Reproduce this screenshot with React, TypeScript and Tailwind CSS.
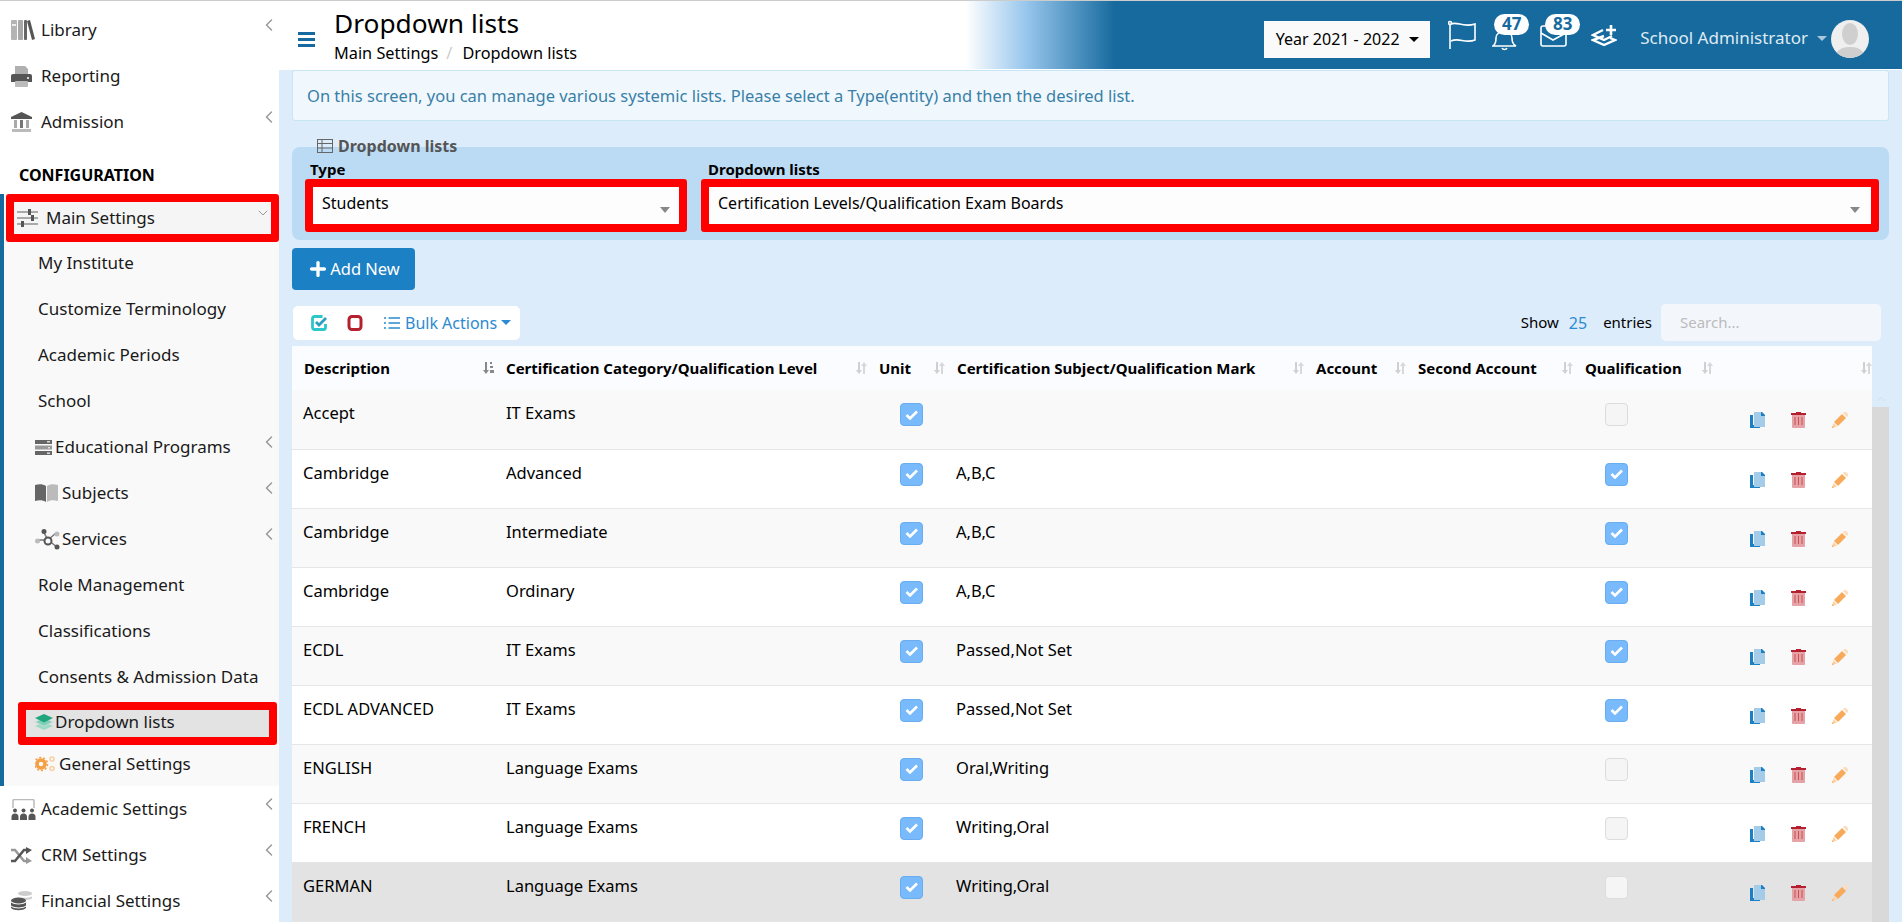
import { ChevronLeft, ChevronDown, ChevronUp, Plus } from "lucide-react";
import type { ReactNode } from "react";

function BooksIcon() {
  return (
    <svg width="24" height="20" viewBox="0 0 24 20" className="shrink-0">
      <rect x="0" y="0" width="6" height="20" rx="1" fill="#b4b4b4" />
      <rect x="1" y="4" width="4" height="2" fill="#eee" />
      <rect x="7" y="0" width="5" height="20" rx="1" fill="#a8a8a8" />
      <rect x="13" y="0" width="3" height="20" rx="1" fill="#666" />
      <path d="M16 1l3-1 5 19-3 1z" fill="#555" />
    </svg>
  );
}

function PrinterIcon() {
  return (
    <svg width="21" height="21" viewBox="0 0 21 21" className="shrink-0">
      <path d="M4 0h10l3 3v6H4z" fill="#b0b0b0" />
      <path d="M2 8h17a2 2 0 0 1 2 2v6H0v-6a2 2 0 0 1 2-2z" fill="#555" />
      <circle cx="17" cy="12" r="1" fill="#fff" />
      <rect x="4" y="15" width="13" height="6" rx="1" fill="#bbb" />
    </svg>
  );
}

function BankIcon() {
  return (
    <svg width="21" height="20" viewBox="0 0 21 20" className="shrink-0">
      <path d="M10.500 0L21 5v2H0V5z" fill="#555" />
      <rect x="3" y="8" width="3" height="8" fill="#aaa" />
      <rect x="9" y="8" width="3" height="8" fill="#777" />
      <rect x="15" y="8" width="3" height="8" fill="#aaa" />
      <rect x="1" y="17" width="19" height="3" fill="#bbb" />
    </svg>
  );
}

function SlidersIcon() {
  return (
    <svg width="21" height="18" viewBox="0 0 21 18" className="shrink-0">
      <rect x="0" y="2" width="21" height="2" fill="#aaa" />
      <rect x="0" y="8" width="21" height="2" fill="#aaa" />
      <rect x="0" y="14" width="21" height="2" fill="#aaa" />
      <rect x="11" y="0" width="3" height="6" fill="#555" />
      <rect x="14" y="6" width="3" height="6" fill="#555" />
      <rect x="4" y="12" width="3" height="6" fill="#555" />
    </svg>
  );
}

function ServerIcon() {
  return (
    <svg width="17" height="15" viewBox="0 0 17 15" className="shrink-0">
      <rect x="0" y="0" width="17" height="4" fill="#666" />
      <rect x="0" y="5.500" width="17" height="4" fill="#999" />
      <rect x="0" y="11" width="17" height="4" fill="#666" />
      <rect x="12" y="1" width="3" height="1.500" fill="#ddd" />
      <rect x="13" y="7" width="2" height="1.500" fill="#ddd" />
      <rect x="12" y="12.500" width="3" height="1.500" fill="#ddd" />
    </svg>
  );
}

function BookIcon() {
  return (
    <svg width="23" height="18" viewBox="0 0 23 18" className="shrink-0">
      <path d="M0 1c4-1 8-1 11 1v16C8 16 4 16 0 17z" fill="#666" />
      <path d="M12 2c3-2 7-2 11-1v16c-4-1-8-1-11 1z" fill="#bbb" />
    </svg>
  );
}

function NodesIcon() {
  return (
    <svg width="25" height="21" viewBox="0 0 25 21" className="shrink-0">
      <path d="M8 2l5 9 9 7M13 11H3M13 11l8-7" stroke="#777" strokeWidth="1.500" fill="none" />
      <circle cx="2.500" cy="12" r="2.500" fill="#bbb" />
      <circle cx="9" cy="2.500" r="2.500" fill="#555" />
      <circle cx="22" cy="5" r="2.500" fill="#bbb" />
      <circle cx="22" cy="18" r="2.500" fill="#555" />
      <circle cx="13" cy="12" r="3.500" fill="#f9f9f9" stroke="#555" strokeWidth="2" />
    </svg>
  );
}

function LayersIcon() {
  return (
    <svg width="18" height="16" viewBox="0 0 18 16" className="shrink-0">
      <path d="M9 8l9 4-9 4-9-4z" fill="#9fdac6" />
      <path d="M9 4l9 4-9 4-9-4z" fill="#7fd0b6" stroke="#e3e3e3" strokeWidth="0.500" />
      <path d="M9 0l9 4-9 4.500L0 4z" fill="#1fa67f" />
    </svg>
  );
}

function CogsIcon() {
  return (
    <svg width="21" height="16" viewBox="0 0 21 16" className="shrink-0">
      <circle cx="6" cy="8" r="4" fill="none" stroke="#f59e42" strokeWidth="3.500" />
      <circle cx="6" cy="8" r="6.500" fill="none" stroke="#f59e42" strokeWidth="1.500" strokeDasharray="2 2" />
      <circle cx="17" cy="3" r="2" fill="none" stroke="#f9cfa0" strokeWidth="1.500" />
      <circle cx="17" cy="12.500" r="2" fill="none" stroke="#f9cfa0" strokeWidth="1.500" />
    </svg>
  );
}

function ClassroomIcon() {
  return (
    <svg width="25" height="21" viewBox="0 0 25 21" className="shrink-0">
      <path d="M2 9V2a1.500 1.500 0 0 1 1.500-1.500h18A1.500 1.500 0 0 1 23 2v7" stroke="#bbb" strokeWidth="1.500" fill="none" />
      {[4, 12.500, 21].map((x) => (
        <g key={x} fill="#555">
          <circle cx={x} cy="11.500" r="2" />
          <path d={`M${x - 3.500} 21v-3a3 3 0 0 1 7 0v3z`} />
        </g>
      ))}
    </svg>
  );
}

function ShuffleIcon() {
  return (
    <svg width="21" height="17" viewBox="0 0 21 17" className="shrink-0">
      <path d="M0 3h4l9 11h3" stroke="#999" strokeWidth="2.500" fill="none" />
      <path d="M0 14h4l9-11h3" stroke="#555" strokeWidth="2.500" fill="none" />
      <path d="M15 0l6 3-6 4z" fill="#555" />
      <path d="M15 10l6 4-6 3z" fill="#999" />
    </svg>
  );
}

function CoinsIcon() {
  return (
    <svg width="21" height="20" viewBox="0 0 21 20" className="shrink-0">
      <ellipse cx="14" cy="2.500" rx="7" ry="2.500" fill="#ccc" />
      <path d="M11 6.500c3 .5 7 .5 10-1v2c-2 1.500-6 1.500-10 1z" fill="#ccc" />
      <ellipse cx="7.500" cy="9.500" rx="7.500" ry="3" fill="#555" />
      <path d="M0 11.500c3 2.500 12 2.500 15 0v3c-3 2.500-12 2.500-15 0z" fill="#555" />
      <path d="M0 15.500c3 2.500 12 2.500 15 0v1.500c-3 3-12 3-15 0z" fill="#555" />
    </svg>
  );
}

function SortIcon({ active = false }: { active?: boolean }) {
  if (active) {
    return (
      <svg width="11" height="12" viewBox="0 0 11 12" className="shrink-0">
        <path d="M2 0h2v8h2l-3 4-3-4h2z" fill="#888" />
        <rect x="7" y="0" width="2" height="2" fill="#888" />
        <rect x="7" y="4" width="3" height="2" fill="#888" />
        <rect x="7" y="8" width="4" height="3" fill="#888" />
      </svg>
    );
  }
  return (
    <svg width="11" height="12" viewBox="0 0 11 12" className="shrink-0">
      <path d="M2 0h2v8h2l-3 4-3-4h2z" fill="#d0d0d0" />
      <path d="M7 12h2V4h2L8 0 5 4h2z" fill="#d8d8d8" />
    </svg>
  );
}

function CopyIcon() {
  return (
    <svg width="15" height="16" viewBox="0 0 15 16">
      <path d="M0 3h3v10h7v3H0z" fill="#1b80c4" />
      <path d="M4 0h7v4h4v11H4z" fill="#a4cbe8" />
      <path d="M11 0h1l3 3v1h-4z" fill="#1b80c4" />
    </svg>
  );
}

function TrashIcon() {
  return (
    <svg width="15" height="16" viewBox="0 0 15 16">
      <path d="M1 3h13v12a1 1 0 0 1-1 1H2a1 1 0 0 1-1-1z" fill="#e5a3a8" />
      <rect x="0" y="1" width="15" height="2" fill="#b5202e" />
      <rect x="5" y="0" width="5" height="1" fill="#b5202e" />
      <rect x="3.500" y="5" width="1" height="8" fill="#c9504f" />
      <rect x="7" y="5" width="1" height="8" fill="#c9504f" />
      <rect x="10.500" y="5" width="1" height="8" fill="#c9504f" />
    </svg>
  );
}

function PencilIcon() {
  return (
    <svg width="16" height="16" viewBox="0 0 16 16">
      <path d="M2 10l8-8 4 4-8 8z" fill="#f9a95a" />
      <path d="M11 1l1-1h2l2 2v2l-1 1z" fill="#fcdcbc" />
      <path d="M1.500 11l3.500 3.500L0 16z" fill="#fcd2a2" />
      <path d="M0.500 14L0 16l2-.5z" fill="#f9a95a" />
    </svg>
  );
}

function CheckBox({ on }: { on: boolean }) {
  if (!on) {
    return <span className="block h-[23px] w-[23px] rounded-[4px] border border-[#dcdcdc] bg-[#f5f5f5]" />;
  }
  return (
    <span className="flex h-[23px] w-[23px] items-center justify-center rounded-[4px] border border-[#68adf0] bg-[#78bafc]">
      <svg width="13" height="10" viewBox="0 0 13 10">
        <path d="M1.500 5l3.500 3.500 7-7" stroke="#fff" strokeWidth="2.600" fill="none" />
      </svg>
    </span>
  );
}

function SideRow({ icon, label, arrow }: { icon: ReactNode; label: string; arrow?: boolean }) {
  return (
    <div className="flex h-[46px] items-center pl-[11px]">
      <span className="flex w-[30px] shrink-0 items-center">{icon}</span>
      <span className="flex-1 text-[17px]">{label}</span>
      {arrow && <ChevronLeft size={20} strokeWidth={1.800} className="mb-[10px] text-[#999]" />}
    </div>
  );
}

function SubRow({ label, icon, arrow, gap }: { label: string; icon?: ReactNode; arrow?: boolean; gap?: string }) {
  return (
    <div className={`flex h-[46px] items-center ${icon ? "pl-[31px]" : "pl-[34px]"}`}>
      {icon && <span className="flex shrink-0 items-center">{icon}</span>}
      <span className={`flex-1 text-[17px] ${gap ?? ""}`}>{label}</span>
      {arrow && <ChevronLeft size={20} strokeWidth={1.800} className="mb-[10px] text-[#999]" />}
    </div>
  );
}

function Sidebar() {
  return (
    <aside className="w-[279px] shrink-0 bg-white pt-[6px] text-[#1a1a1a]">
      <SideRow icon={<BooksIcon />} label="Library" arrow />
      <SideRow icon={<PrinterIcon />} label="Reporting" />
      <SideRow icon={<BankIcon />} label="Admission" arrow />
      <div className="flex h-[49px] items-center pl-[19px] pt-[10px] text-[16px] font-bold text-black">CONFIGURATION</div>
      <div className="border-l-4 border-[#166a9e] bg-[#f9f9f9]">
        <div className="-ml-[4px] flex h-[48px] items-center">
          <div className="ml-[6px] flex h-[48px] flex-1 items-center rounded-[3px] border-8 border-[#ff0000] bg-[#f5f5f5]">
            <span className="flex w-[32px] shrink-0 pl-[3px]"><SlidersIcon /></span>
            <span className="flex-1 text-[17px]">Main Settings</span>
            <ChevronDown size={16} strokeWidth={1.500} className="mb-[10px] text-[#999]" />
          </div>
        </div>
        <div className="-mt-[2px]">
          <SubRow label="My Institute" />
          <SubRow label="Customize Terminology" />
          <SubRow label="Academic Periods" />
          <SubRow label="School" />
          <SubRow label="Educational Programs" icon={<ServerIcon />} arrow gap="ml-[3px]" />
          <SubRow label="Subjects" icon={<BookIcon />} arrow gap="ml-[4px]" />
          <SubRow label="Services" icon={<NodesIcon />} arrow gap="ml-[2px]" />
          <SubRow label="Role Management" />
          <SubRow label="Classifications" />
          <SubRow label="Consents & Admission Data" />
        </div>
        <div className="-ml-[4px] mt-[2px] flex">
          <div className="ml-[18px] mr-[2px] flex h-[43px] flex-1 items-center rounded-[3px] border-8 border-[#ff0000] bg-[#e3e3e3] pb-[3px] pl-[9px]">
            <LayersIcon />
            <span className="ml-[2px] text-[17px]">Dropdown lists</span>
          </div>
        </div>
        <div className="flex h-[41px] items-center pb-[3px] pl-[31px]">
          <CogsIcon />
          <span className="ml-[3px] text-[17px]">General Settings</span>
        </div>
      </div>
      <SideRow icon={<ClassroomIcon />} label="Academic Settings" arrow />
      <SideRow icon={<ShuffleIcon />} label="CRM Settings" arrow />
      <SideRow icon={<CoinsIcon />} label="Financial Settings" arrow />
    </aside>
  );
}

function Header() {
  return (
    <header className="flex h-[69px] shrink-0 items-center border-b border-white bg-[linear-gradient(90deg,#ffffff_0%,#ffffff_42.300%,#96c5ec_46.100%,#166a9e_51.500%,#166a9e_100%)] pr-[33px]">
      <div className="ml-[19px] flex w-[17px] shrink-0 flex-col gap-[3px] pt-[8px]">
        <span className="h-[3px] bg-[#166a9e]" />
        <span className="h-[3px] bg-[#166a9e]" />
        <span className="h-[3px] bg-[#166a9e]" />
      </div>
      <div className="ml-[19px] flex-1">
        <div className="text-[26.300px] leading-[34px] text-black">Dropdown lists</div>
        <div className="mt-[2px] flex text-[16.300px] leading-[22px] text-black">
          <span>Main Settings</span>
          <span className="ml-[8px] mr-[10px] text-[#ccc]">/</span>
          <span>Dropdown lists</span>
        </div>
      </div>
      <div className="mt-[8px] flex h-[37px] w-[166px] items-center justify-center gap-[9px] bg-[#fafafa] text-[16px] text-black">
        Year 2021 - 2022
        <span className="h-0 w-0 border-x-[5px] border-t-[5px] border-x-transparent border-t-black" />
      </div>
      <svg width="28" height="30" viewBox="0 0 28 30" className="ml-[18px]" fill="none" stroke="#fff" strokeWidth="1.600">
        <path d="M2 4v25" />
        <circle cx="2" cy="3" r="1.500" />
        <path d="M3 4c7-3 11 4 24 0v16c-10 4-16-3-24 1" />
      </svg>
      <div className="relative -mt-[7px] ml-[16px] h-[36px] w-[37px]">
        <svg width="25" height="21" viewBox="0 0 25 21" className="absolute left-0 top-[16px]" fill="none" stroke="#fff" strokeWidth="1.600">
          <path d="M1 16c3-2 3-5 3-8 0-4 4-7 8-7s8 3 8 7c0 3 0 6 4 8z" />
          <path d="M10 18c1 2 4 2 5 0" />
        </svg>
        <span className="absolute left-[2px] top-0 flex h-[21px] w-[35px] items-center justify-center rounded-full bg-white text-[17px] font-bold text-[#166a9e]">47</span>
      </div>
      <div className="relative -mt-[7px] ml-[11px] h-[36px] w-[40px]">
        <svg width="27" height="22" viewBox="0 0 27 22" className="absolute left-0 top-[11px]" fill="none" stroke="#fff" strokeWidth="1.600">
          <rect x="1" y="1" width="25" height="20" rx="2" />
          <path d="M1 8l12 7 13-7" />
        </svg>
        <span className="absolute left-[5px] top-0 flex h-[21px] w-[35px] items-center justify-center rounded-full bg-white text-[17px] font-bold text-[#166a9e]">83</span>
      </div>
      <svg width="26" height="25" viewBox="0 0 26 25" className="ml-[11px] mt-[3px]" fill="none" stroke="#fff" strokeWidth="2.400">
        <path d="M13 12L2 16l11 5 11-5-5-2" />
        <path d="M12 6L2 11l11 5 8-4" />
        <path d="M20 1v10M15 6h10" strokeWidth="2.600" />
      </svg>
      <span className="ml-[23px] mt-[6px] text-[17px] text-[#dfeaf2]">School Administrator</span>
      <span className="ml-[9px] mt-[6px] h-0 w-0 border-x-[5px] border-t-[5px] border-x-transparent border-t-[#a9c6da]" />
      <div className="ml-[4px] mt-[8px] flex h-[38px] w-[38px] items-end justify-center overflow-hidden rounded-full bg-[#efefef]">
        <svg width="38" height="38" viewBox="0 0 38 38">
          <ellipse cx="19" cy="14" rx="8" ry="11" fill="#cfcfcf" />
          <path d="M4 38c1-9 8-11 15-11s14 2 15 11z" fill="#cfcfcf" />
        </svg>
      </div>
    </header>
  );
}

function Caret() {
  return <span className="mt-[15px] block h-0 w-0 border-x-[5px] border-t-[6px] border-x-transparent border-t-[#888]" />;
}

const rows = [
  { d: "Accept", c: "IT Exams", u: true, s: "", q: false, bg: "bg-[#f9f9f9]" },
  { d: "Cambridge", c: "Advanced", u: true, s: "A,B,C", q: true, bg: "bg-white" },
  { d: "Cambridge", c: "Intermediate", u: true, s: "A,B,C", q: true, bg: "bg-[#f9f9f9]" },
  { d: "Cambridge", c: "Ordinary", u: true, s: "A,B,C", q: true, bg: "bg-white" },
  { d: "ECDL", c: "IT Exams", u: true, s: "Passed,Not Set", q: true, bg: "bg-[#f9f9f9]" },
  { d: "ECDL ADVANCED", c: "IT Exams", u: true, s: "Passed,Not Set", q: true, bg: "bg-white" },
  { d: "ENGLISH", c: "Language Exams", u: true, s: "Oral,Writing", q: false, bg: "bg-[#f9f9f9]" },
  { d: "FRENCH", c: "Language Exams", u: true, s: "Writing,Oral", q: false, bg: "bg-white" },
  { d: "GERMAN", c: "Language Exams", u: true, s: "Writing,Oral", q: false, bg: "bg-[#e3e3e3]" },
];

const columns = [
  { label: "Description", w: "w-[202px]", active: true },
  { label: "Certification Category/Qualification Level", w: "w-[373px]" },
  { label: "Unit", w: "w-[78px]" },
  { label: "Certification Subject/Qualification Mark", w: "w-[359px]" },
  { label: "Account", w: "w-[102px]" },
  { label: "Second Account", w: "w-[167px]" },
  { label: "Qualification", w: "w-[140px]" },
  { label: "", w: "w-[159px]" },
];

function DataTable() {
  return (
    <table className="w-[1580px] table-fixed border-collapse text-[16.500px] text-black">
      <thead>
        <tr className="h-[44px] bg-[#fbfcff]">
          {columns.map((col) => (
            <th key={col.label} className={`${col.w} pl-[12px] text-left text-[15px] font-bold`}>
              <div className="flex items-center justify-between">
                <span className="whitespace-nowrap">{col.label}</span>
                <SortIcon active={col.active} />
              </div>
            </th>
          ))}
        </tr>
      </thead>
      <tbody>
        {rows.map((row, i) => (
          <tr key={i} className={`h-[59px] border-b border-[#e6e6e6] align-top ${row.bg}`}>
            <td className="pl-[11px] pt-[12px] leading-[22px]">{row.d}</td>
            <td className="pl-[12px] pt-[12px] leading-[22px]">{row.c}</td>
            <td className="pl-[33px] pt-[13px]"><CheckBox on={row.u} /></td>
            <td className="pl-[11px] pt-[12px] leading-[22px]">{row.s}</td>
            <td />
            <td />
            <td className="pl-[32px] pt-[13px]"><CheckBox on={row.q} /></td>
            <td className="pt-[22px]">
              <div className="flex items-center gap-[26px] pl-[37px]">
                <CopyIcon />
                <TrashIcon />
                <PencilIcon />
              </div>
            </td>
          </tr>
        ))}
      </tbody>
    </table>
  );
}

export default function App() {
  return (
    <div className="flex h-[922px] w-[1902px] flex-col overflow-hidden border-t border-[#cccccc] bg-[#ddecfb] font-['Noto_Sans',sans-serif]">
      <div className="flex min-h-0 flex-1">
        <Sidebar />
        <main className="flex min-w-0 flex-1 flex-col">
          <Header />
          <div className="flex min-h-0 flex-1 flex-col px-[13px]">
            <div className="flex h-[51px] shrink-0 items-center rounded-[3px] border border-[#c5e6f2] bg-[#f0f8fe] pl-[14px] pt-[2px] text-[16.500px] text-[#3a7fa6]">
              On this screen, you can manage various systemic lists. Please select a Type(entity) and then the desired list.
            </div>
            <section className="relative mt-[26px] flex h-[93px] shrink-0 gap-[14px] rounded-[8px] bg-[#bbdbf5] pl-[13px] pr-[10px]">
              <div className="absolute left-[25px] -top-[13px] flex items-center gap-[5px] text-[16px] font-bold text-[#555]">
                <svg width="16" height="14" viewBox="0 0 16 14" fill="none" stroke="#666" strokeWidth="1">
                  <rect x="0.500" y="0.500" width="15" height="13" />
                  <path d="M0.500 4.500h15M0.500 9h15M5 0.500v13" />
                </svg>
                Dropdown lists
              </div>
              <div className="w-[382px] shrink-0 pt-[12px]">
                <div className="pl-[5px] text-[15px] font-bold leading-[20px] text-black">Type</div>
                <div className="flex h-[53px] items-start justify-between rounded-[3px] border-8 border-[#ff0000] bg-[#fdfdfd] pl-[9px] pr-[9px] pt-[5px] text-[16px] leading-[22px] text-black">
                  Students
                  <Caret />
                </div>
              </div>
              <div className="flex-1 pt-[12px]">
                <div className="pl-[7px] text-[15px] font-bold leading-[20px] text-black">Dropdown lists</div>
                <div className="flex h-[53px] items-start justify-between rounded-[3px] border-8 border-[#ff0000] bg-[#fdfdfd] pl-[9px] pr-[11px] pt-[5px] text-[16px] leading-[22px] text-black">
                  Certification Levels/Qualification Exam Boards
                  <Caret />
                </div>
              </div>
            </section>
            <button className="mt-[8px] flex h-[42px] w-[123px] shrink-0 items-center justify-center gap-[1px] rounded-[4px] bg-[#1b80c4] text-[16.500px] text-white">
              <Plus size={22} strokeWidth={3.600} />
              Add New
            </button>
            <div className="mt-[14px] flex h-[37px] shrink-0 items-center">
              <div className="ml-[1px] flex h-[34px] w-[227px] items-center rounded-[5px] bg-white pl-[18px]">
                <svg width="16" height="16" viewBox="0 0 16 16" fill="none" strokeWidth="2.800">
                  <path d="M14.500 9v3.500a2 2 0 0 1-2 2h-9a2 2 0 0 1-2-2v-9a2 2 0 0 1 2-2h8" stroke="#2bc7cb" />
                  <path d="M5 7l3 3 7-7" stroke="#2a9fc0" />
                </svg>
                <svg width="16" height="16" viewBox="0 0 16 16" fill="none" className="ml-[20px]">
                  <rect x="2" y="1.500" width="12" height="13" rx="3" stroke="#b5202e" strokeWidth="3" />
                </svg>
                <svg width="16" height="14" viewBox="0 0 16 14" fill="none" stroke="#2b8bd0" strokeWidth="1.500" className="ml-[21px]">
                  <path d="M4.500 2H16M4.500 7H16M4.500 12H16M0 2h2M0 7h2M0 12h2" />
                </svg>
                <span className="ml-[5px] text-[16px] text-[#2b8bd0]">Bulk Actions</span>
                <span className="ml-[4px] h-0 w-0 border-x-[5px] border-t-[5px] border-x-transparent border-t-[#2b8bd0]" />
              </div>
              <div className="flex-1" />
              <span className="text-[15px] text-black">Show</span>
              <span className="ml-[10px] text-[16px] text-[#2b8bd0]">25</span>
              <span className="ml-[16px] text-[15px] text-black">entries</span>
              <div className="ml-[9px] mr-[8px] flex h-[37px] w-[220px] items-center rounded-[5px] bg-[#f3f7fc] pl-[19px] text-[15px] text-[#bbbbbb]">Search...</div>
            </div>
            <div className="mt-[5px] flex min-h-0 flex-1">
              <div className="min-w-0 shrink-0 overflow-hidden"><DataTable /></div>
              <div className="mt-[45px] flex w-[17px] shrink-0 flex-col">
                <div className="flex h-[16px] items-center justify-center"><ChevronUp size={12} className="text-[#d5dde5]" /></div>
                <div className="flex-1 bg-[#d9d9d9]" />
              </div>
            </div>
          </div>
        </main>
      </div>
    </div>
  );
}
